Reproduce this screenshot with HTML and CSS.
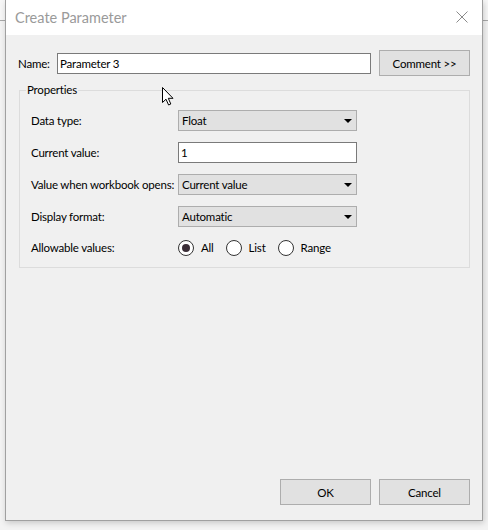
FILE: index.html
```html
<!DOCTYPE html>
<html>
<head>
<meta charset="utf-8">
<link rel="stylesheet" href="styles.css">
</head>
<body>
<div class="desk">
  <div class="dialog">
    <div class="titlebar">
      <span class="title">Create Parameter</span>
      <svg class="close" width="12" height="12" viewBox="0 0 12 12"><path d="M0.5 0.5 L11.5 11.5 M11.5 0.5 L0.5 11.5" stroke="#8a8a8a" stroke-width="1" fill="none"/></svg>
    </div>
    <div class="body">
      <div class="name-row">
        <span class="lbl-name">Name:</span>
        <div class="input name-input">Parameter 3</div>
        <div class="btn">Comment &gt;&gt;</div>
      </div>
      <fieldset class="group">
        <legend>Properties</legend>
        <div class="rows">
          <div class="row">
            <span class="lbl">Data type:</span>
            <div class="select"><span>Float</span><i class="caret"></i></div>
          </div>
          <div class="row">
            <span class="lbl">Current value:</span>
            <div class="input field">1</div>
          </div>
          <div class="row">
            <span class="lbl">Value when workbook opens:</span>
            <div class="select"><span>Current value</span><i class="caret"></i></div>
          </div>
          <div class="row">
            <span class="lbl">Display format:</span>
            <div class="select"><span>Automatic</span><i class="caret"></i></div>
          </div>
          <div class="row radio-row">
            <span class="lbl">Allowable values:</span>
            <div class="radios">
              <span class="radio on"></span><span class="rtxt">All</span>
              <span class="radio"></span><span class="rtxt">List</span>
              <span class="radio"></span><span class="rtxt">Range</span>
            </div>
          </div>
        </div>
      </fieldset>
      <div class="footer">
        <div class="btn">OK</div>
        <div class="btn">Cancel</div>
      </div>
    </div>
    <svg class="cursor" width="13" height="19" viewBox="0 0 13 19"><path d="M0.5 0.5 L0.5 15.5 L4 12.2 L6.6 18 L8.8 17 L6.3 11.3 L11 11.3 Z" fill="#fff" stroke="#000" stroke-width="1" stroke-linejoin="miter"/></svg>
  </div>
</div>
</body>
</html>
```
FILE: styles.css
```css
html, body {
  margin: 0;
  padding: 0;
}
body {
  width: 488px;
  height: 530px;
  overflow: hidden;
  background: #f7f7f7;
  font-family: Lato, "Open Sans", sans-serif;
  font-size: 11.5px;
  letter-spacing: -0.2px;
  color: #000;
  white-space: nowrap;
}
.desk {
  width: 488px;
  height: 530px;
  background: linear-gradient(#f7f7f7 0, #f7f7f7 20px, #a8a8a8 20px, #a8a8a8 21px, #f3f3f3 21px);
}
.dialog {
  position: relative;
  margin-left: 5px;
  width: 476px;
  height: 520px;
  border: 1px solid #a0a0a0;
  border-top: none;
  background: #f0f0f0;
  box-shadow: 1px 2px 6px rgba(0,0,0,0.18);
  display: flex;
  flex-direction: column;
}
.titlebar {
  height: 35px;
  background: #fff;
  display: flex;
  align-items: center;
  justify-content: space-between;
  padding: 0 14px 0 9px;
  flex: none;
}
.title {
  font-size: 14.5px;
  letter-spacing: 0;
  color: #9a9a9a;
  margin-top: -1px;
}
.close {
  display: block;
  margin-top: -1px;
}
.body {
  flex: 1;
  display: flex;
  flex-direction: column;
  padding: 15px 12px 15px 12px;
}
.name-row {
  display: flex;
  align-items: center;
  height: 26px;
}
.lbl-name {
  width: 39px;
}
.input {
  background: #fff;
  border: 1px solid #7a7a7a;
  box-sizing: border-box;
  height: 21px;
  line-height: 19px;
  padding-left: 2px;
}
.name-input {
  width: 314px;
  margin-right: 8px;
}
.btn {
  width: 91px;
  height: 26px;
  box-sizing: border-box;
  border: 1px solid #adadad;
  background: #e1e1e1;
  display: flex;
  align-items: center;
  justify-content: center;
}
.group {
  margin: 7px 0 0 1px;
  padding: 0 6px 11px 6px;
  border: 1px solid #dcdcdc;
  min-width: 0;
}
.group legend {
  padding: 0 1px;
  line-height: 14px;
}
.rows {
  display: flex;
  flex-direction: column;
  gap: 11px;
  padding: 13px 0 0 5px;
}
.row {
  display: flex;
  align-items: center;
  height: 21px;
}
.lbl {
  width: 147px;
  flex: none;
}
.select {
  width: 179px;
  height: 21px;
  box-sizing: border-box;
  border: 1px solid #adadad;
  background: #e1e1e1;
  display: flex;
  align-items: center;
  justify-content: space-between;
  padding: 0 4px 0 3px;
}
.caret {
  width: 0;
  height: 0;
  border-left: 4px solid transparent;
  border-right: 4px solid transparent;
  border-top: 4px solid #000;
}
.field {
  width: 179px;
}
.radio-row {
  height: 17px;
  margin-top: 1px;
}
.radios {
  display: flex;
  align-items: center;
}
.radio {
  width: 16px;
  height: 16px;
  box-sizing: border-box;
  border-radius: 50%;
  border: 1px solid #333;
  background: #fff;
  position: relative;
}
.radio.on::after {
  content: "";
  position: absolute;
  left: 3px;
  top: 3px;
  width: 8px;
  height: 8px;
  border-radius: 50%;
  background: #3a2d36;
}
.rtxt {
  margin-left: 7px;
  margin-right: 12px;
}
.footer {
  margin-top: auto;
  display: flex;
  justify-content: flex-end;
  gap: 8px;
}
.cursor {
  position: absolute;
  left: 156px;
  top: 87px;
}
```
